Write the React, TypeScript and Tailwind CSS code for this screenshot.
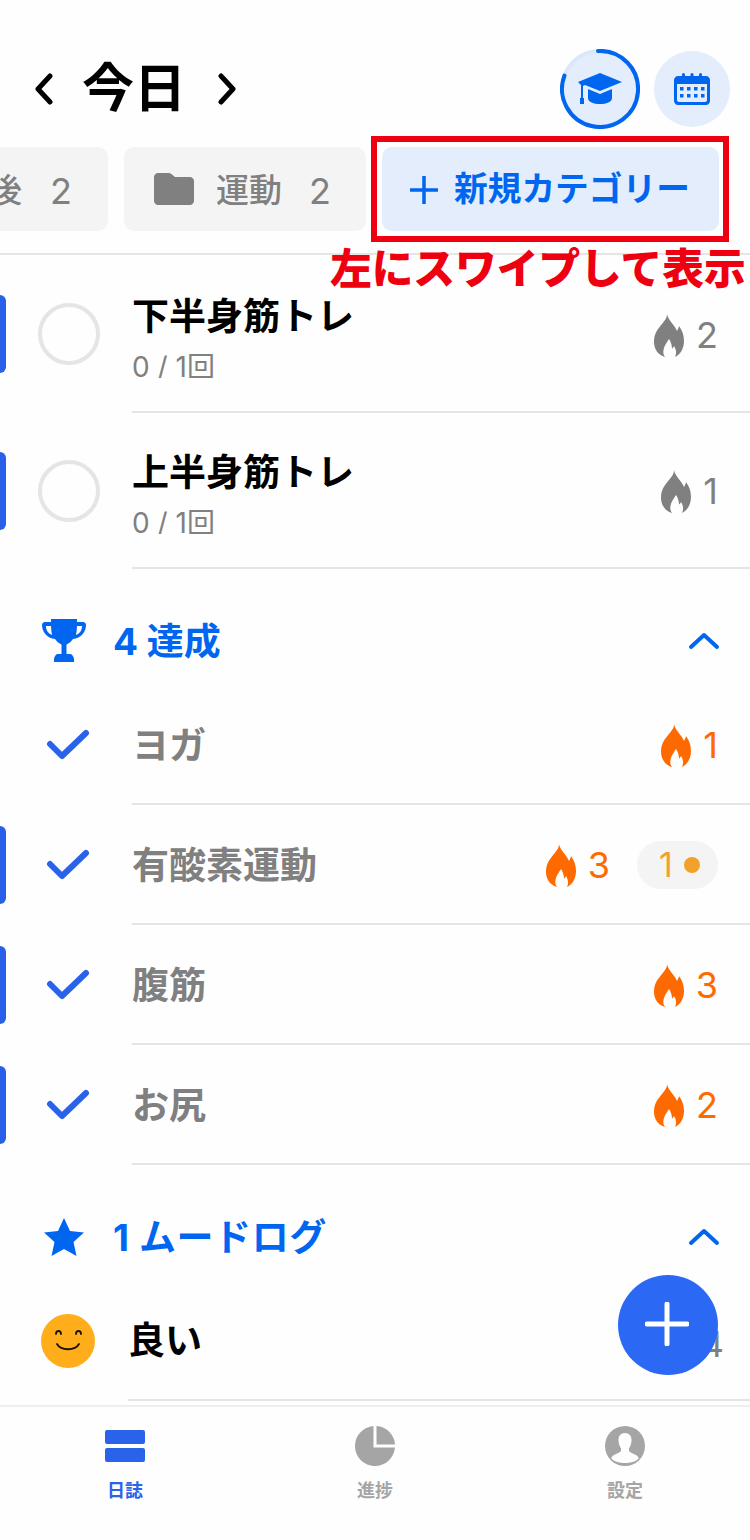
import React from "react";

const FONT = "font-['Inter','Noto_Sans_CJK_JP',sans-serif]";

function Flame({ className }: { className: string }) {
  return (
    <svg viewBox="0 0 30 43" className={"w-[30px] h-[43px] shrink-0 " + className} fill="currentColor">
      <path d="M13 0C14 6 20 10 23 17C24 15 25 13 25 12C28 16 30 21 30 27C30 34 27 40 21 43C23 39 22 35 20 32C19.5 33 19 34 18 34.5C18 31 16.5 27 15 25C13 28 10 32 9.5 36C9 39 9.5 41 11 43C4 41 0 35 0 28C0 19 4 15 8 10C10 7 13 5 13 0Z" />
    </svg>
  );
}

function Chevron({ dir }: { dir: "l" | "r" }) {
  return (
    <svg viewBox="0 0 20 32" className="w-[20px] h-[32px] shrink-0" fill="none" stroke="#000" strokeWidth="5" strokeLinecap="round" strokeLinejoin="round">
      <path d={dir === "l" ? "M16 3L4 16L16 29" : "M4 3L16 16L4 29"} />
    </svg>
  );
}

function ChevUp() {
  return (
    <svg viewBox="0 0 32 18" className="w-[32px] h-[18px]" fill="none" stroke="#0066f0" strokeWidth="4" strokeLinecap="round" strokeLinejoin="round">
      <path d="M3 15L16 3L29 15" />
    </svg>
  );
}

function Check() {
  return (
    <svg viewBox="0 0 44 32" className="w-[44px] h-[32px]" fill="none" stroke="#2a62ea" strokeWidth="6" strokeLinecap="round" strokeLinejoin="round">
      <path d="M4 15L16 27L40 4" />
    </svg>
  );
}

function Streak({ n, done }: { n: number; done: boolean }) {
  return (
    <div className={"flex items-center gap-[12px] " + (done ? "text-[#ff6a00]" : "text-[#808080]")}>
      <Flame className="" />
      <span className="text-[36px] leading-none">{n}</span>
    </div>
  );
}

function Bar({ on }: { on: boolean }) {
  return <div className={"w-[6px] h-[78px] rounded-r-[6px] shrink-0 " + (on ? "bg-[#2a5fe8]" : "bg-transparent")} />;
}

function TodoRow({ title, streak, h, inner }: { title: string; streak: number; h: string; inner: string }) {
  return (
    <div className={"flex items-center " + h}>
      <Bar on />
      <div className="w-[62px] h-[62px] rounded-full border-4 border-[#e5e5e5] ml-[32px] mr-[32px] shrink-0" />
      <div className={"flex-1 h-full border-b-2 border-[#e5e5e5] flex items-center justify-between pr-[32px] " + inner}>
        <div className="flex flex-col">
          <span className="text-[37px] font-bold leading-[44px] text-black mt-[7px]">{title}</span>
          <span className="text-[28px] leading-[34px] h-[28px] overflow-hidden text-[#808080] mt-[11px]">0 / 1回</span>
        </div>
        <div className="mt-[4px]">
          <Streak n={streak} done={false} />
        </div>
      </div>
    </div>
  );
}

function DoneRow({ title, streak, bar, pill }: { title: string; streak: number; bar: boolean; pill?: boolean }) {
  return (
    <div className="flex items-center h-[120px]">
      <Bar on={bar} />
      <div className="w-[126px] pl-[40px] shrink-0 flex">
        <Check />
      </div>
      <div className="flex-1 h-full border-b-2 border-[#e5e5e5] flex items-center justify-between pr-[32px]">
        <span className="text-[37px] font-bold text-[#808080] leading-none mt-[2px]">{title}</span>
        <div className="flex items-center gap-[27px] mt-[2px]">
          <Streak n={streak} done />
          {pill && (
            <div className="w-[81px] h-[48px] rounded-full bg-[#f4f4f4] flex items-center justify-center gap-[11px] pl-[4px] text-[#f2a22b] text-[34px] leading-none">
              <span>1</span>
              <span className="w-[16px] h-[16px] rounded-full bg-[#f2a22b]" />
            </div>
          )}
        </div>
      </div>
    </div>
  );
}

function GroupHead({ icon, label, track }: { icon: React.ReactNode; label: string; track: string }) {
  return (
    <div className="h-[116px] pt-[28px] flex items-center pr-[30px]">
      <div className="w-[113px] pl-[42px] shrink-0 flex">{icon}</div>
      <span className={"flex-1 text-[37px] font-bold text-[#0066f0] leading-none " + track}>{label}</span>
      <ChevUp />
    </div>
  );
}

function Tab({ label, icon, active }: { label: string; icon: React.ReactNode; active?: boolean }) {
  return (
    <div className="flex-1 flex flex-col items-center pt-[19px]">
      <div className="h-[40px] flex items-center justify-center">{icon}</div>
      <span className={"text-[18px] font-bold leading-none mt-[16px] " + (active ? "text-[#2a62ea]" : "text-[#a5a5a5]")}>{label}</span>
    </div>
  );
}

export default function App() {
  return (
    <div className={"relative w-[750px] h-[1540px] overflow-hidden bg-[#fefefe] flex flex-col " + FONT}>
      {/* header */}
      <div className="h-[147px] shrink-0 flex items-center justify-between pt-[31px] pr-[20px] pl-[34px]">
        <div className="flex items-center">
          <Chevron dir="l" />
          <span className="text-[52px] font-bold text-black leading-none ml-[28px] mr-[31px]">今日</span>
          <Chevron dir="r" />
        </div>
        <div className="flex items-center gap-[14px]">
          <div className="relative w-[80px] h-[80px] rounded-full bg-[#e3edfc] flex items-center justify-center">
            <svg viewBox="0 0 80 80" className="absolute inset-0 w-[80px] h-[80px]" fill="none">
              <circle cx="40" cy="40" r="38" stroke="#dbe8fb" strokeWidth="4" />
              <path d="M38 2A38 38 0 1 1 4.5 26.5" stroke="#0066f0" strokeWidth="4" strokeLinecap="round" />
            </svg>
            <svg viewBox="0 0 44 32" className="w-[44px] h-[32px] relative" fill="#0066f0">
              <path d="M22 0L44 9L22 18L7 12L5 13V26H3V12L0 9Z" />
              <path d="M10 16L22 21L34 16V25C34 29 28 31 22 31C16 31 10 29 10 25Z" />
              <rect x="2" y="25" width="4" height="6" />
            </svg>
          </div>
          <div className="w-[76px] h-[76px] rounded-full bg-[#e3edfc] flex items-center justify-center">
            <svg viewBox="0 0 36 32" className="w-[36px] h-[32px]" fill="#0066f0">
              <path fillRule="evenodd" d="M4 3H32C34 3 36 5 36 7V28C36 30 34 32 32 32H4C2 32 0 30 0 28V7C0 5 2 3 4 3ZM3 11V27C3 28 4 29 5 29H31C32 29 33 28 33 27V11Z" />
              <rect x="8" y="0" width="3" height="7" rx="1.5" />
              <rect x="16.5" y="0" width="3" height="7" rx="1.5" />
              <rect x="25" y="0" width="3" height="7" rx="1.5" />
              {[6, 13, 20, 27].map((x) => (
                <React.Fragment key={x}>
                  <rect x={x} y="14" width="3.5" height="3.5" />
                  <rect x={x} y="21" width="3.5" height="3.5" />
                </React.Fragment>
              ))}
            </svg>
          </div>
        </div>
      </div>

      {/* category tabs */}
      <div className="h-[84px] shrink-0 flex gap-[16px] ml-[-20px]">
        <div className="w-[128px] h-full rounded-[10px] bg-[#f4f4f4] flex items-center justify-end pr-[36px] gap-[28px] pt-[3px] text-[#808080] text-[33px] font-medium overflow-hidden">
          <span>後</span>
          <span className="font-normal text-[36px]">2</span>
        </div>
        <div className="w-[242px] h-full rounded-[10px] bg-[#f4f4f4] flex items-center pl-[30px] pt-[3px] text-[#808080] text-[33px] font-medium">
          <svg viewBox="0 0 40 32" className="w-[40px] h-[32px] shrink-0 mb-[3px]" fill="#808080">
            <path d="M4 0H15C16 0 17 .5 18 1.5L21 4H36C38 4 40 6 40 8V28C40 30 38 32 36 32H4C2 32 0 30 0 28V4C0 2 2 0 4 0Z" />
          </svg>
          <span className="ml-[22px]">運動</span>
          <span className="ml-[27px] font-normal text-[36px]">2</span>
        </div>
        <div className="w-[337px] h-full rounded-[10px] bg-[#e3edfc] flex items-center pl-[28px] pt-[1px] text-[#0066f0] text-[33.7px] font-bold">
          <svg viewBox="0 0 28 28" className="w-[28px] h-[28px] shrink-0" fill="none" stroke="#0066f0" strokeWidth="3.5">
            <path d="M14 0V28M0 14H28" />
          </svg>
          <span className="ml-[16px] whitespace-nowrap">新規カテゴリー</span>
        </div>
      </div>

      <div className="h-[22px] shrink-0 border-b-2 border-[#e5e5e5] box-content" />

      {/* list */}
      <div className="flex-1 flex flex-col min-h-0">
        <TodoRow title="下半身筋トレ" streak={2} h="h-[158px]" inner="" />
        <TodoRow title="上半身筋トレ" streak={1} h="h-[156px]" inner="pb-[2px]" />
        <GroupHead
          label="4 達成"
          track=""
          icon={
            <svg viewBox="0 0 44 44" className="w-[44px] h-[44px]" fill="#0066f0">
              <path d="M9 0H35V3H41C43 3 44 4.5 44 6C44 13 39 19 31 20C29 23 26 25 24.5 25.5V35H28C30 35 31.5 37 32 40V43H12V40C12.5 37 14 35 16 35H19.5V25.5C18 25 15 23 13 20C5 19 0 13 0 6C0 4.5 1 3 3 3H9ZM4 7C4 11 6 14.5 10 16C9.5 13 9 10 9 7ZM40 7H35C35 10 34.5 13 34 16C38 14.5 40 11 40 7Z" fillRule="evenodd" />
            </svg>
          }
        />
        <DoneRow title="ヨガ" streak={1} bar={false} />
        <DoneRow title="有酸素運動" streak={3} bar pill />
        <DoneRow title="腹筋" streak={3} bar />
        <DoneRow title="お尻" streak={2} bar />
        <GroupHead
          label="1 ムードログ"
          track="tracking-[0.6px]"
          icon={
            <svg viewBox="0 0 40 38" className="w-[40px] h-[38px] ml-[2px]" fill="#0066f0">
              <path d="M20 0L26 13L40 14.5L29.5 24L32.5 38L20 31L7.5 38L10.5 24L0 14.5L14 13Z" />
            </svg>
          }
        />
        <div className="flex items-center h-[120px]">
          <div className="w-[128px] pl-[41px] shrink-0 flex">
            <svg viewBox="0 0 54 54" className="w-[54px] h-[54px]">
              <circle cx="27" cy="27" r="27" fill="#ffad1a" />
              <path d="M15 20C15 16 20 16 20 20M35 20C35 16 40 16 40 20M16 30C20 37 34 37 38 30" fill="none" stroke="#1a1200" strokeWidth="1.8" strokeLinecap="round" />
            </svg>
          </div>
          <div className="flex-1 h-full border-b-2 border-[#e5e5e5] flex items-center justify-between pr-[26px]">
            <span className="text-[37px] font-bold text-black leading-none">良い</span>
            <span className="text-[36px] text-[#808080] leading-none mt-[8px]">4</span>
          </div>
        </div>
      </div>

      {/* bottom tabs */}
      <div className="h-[135px] shrink-0 border-t-2 border-[#efefef] bg-[#fefefe] flex">
        <Tab
          active
          label="日誌"
          icon={
            <div className="flex flex-col gap-[4px]">
              <div className="w-[40px] h-[14px] rounded-[2px] bg-[#2a62ea]" />
              <div className="w-[40px] h-[14px] rounded-[2px] bg-[#2a62ea]" />
            </div>
          }
        />
        <Tab
          label="進捗"
          icon={
            <svg viewBox="0 0 40 40" className="w-[40px] h-[40px]" fill="#a5a5a5">
              <path d="M18.5 0V21.5H40C39 32 30.5 40 20 40C9 40 0 31 0 20C0 9.5 8 1 18.5 0Z" />
              <path d="M21.5 0C31.5 .7 39.3 8.5 40 18.5H21.5Z" />
            </svg>
          }
        />
        <Tab
          label="設定"
          icon={
            <svg viewBox="0 0 40 40" className="w-[40px] h-[40px]">
              <circle cx="20" cy="20" r="20" fill="#a5a5a5" />
              <path d="M20 7C24.5 7 26.5 10 26.5 14C26.5 18 25 21 24 22.5V24.5C24 26 27 27 30 28.5C32 29.5 33.5 31 33.8 32.5C30 36 25 37 20 37C15 37 10 36 6.2 32.5C6.5 31 8 29.5 10 28.5C13 27 16 26 16 24.5V22.5C15 21 13.5 18 13.5 14C13.5 10 15.5 7 20 7Z" fill="#fefefe" />
            </svg>
          }
        />
      </div>

      {/* floating add button */}
      <div className="absolute left-[618px] top-[1275px] w-[100px] h-[100px] rounded-full bg-[#2b69f5] flex items-center justify-center">
        <svg viewBox="0 0 44 44" className="w-[44px] h-[44px] mr-[3px] mb-[3px]" fill="none" stroke="#fff" strokeWidth="5" strokeLinecap="round">
          <path d="M22 2V42M2 22H42" />
        </svg>
      </div>

      {/* annotation */}
      <div className="absolute left-[371px] top-[136px] w-[358px] h-[106px] border-[6px] border-[#ee0011]" />
      <div className="absolute left-[330px] top-[244px] text-[41.7px] font-black text-[#ee0011] leading-[50px] whitespace-nowrap">左にスワイプして表示</div>
    </div>
  );
}
